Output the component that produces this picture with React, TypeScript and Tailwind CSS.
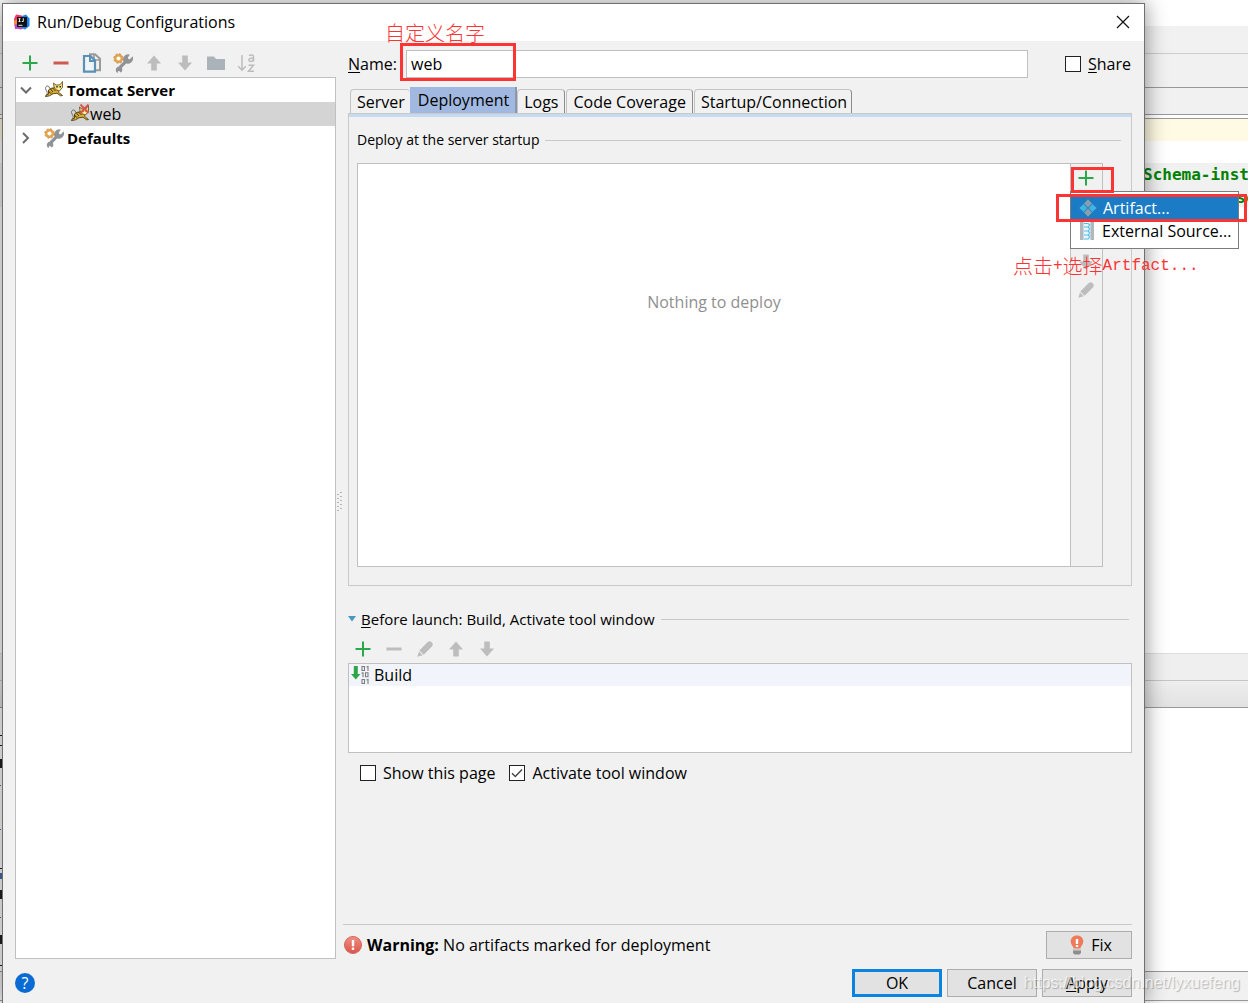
import React, { useState } from "react";

type IconProps = { className?: string };

const PlusIcon = ({ className = "" }: IconProps) => (
  <svg className={className} width="16" height="16" viewBox="0 0 16 16">
    <path d="M0.5 7h15v2h-15z M7 0.5h2v15h-2z" fill="#2aa84a" />
  </svg>
);

const MinusIcon = ({ className = "" }: IconProps) => (
  <svg className={className} width="16" height="16" viewBox="0 0 16 16">
    <path d="M0.5 6.5h15v3h-15z" fill="currentColor" />
  </svg>
);

const CopyIcon = () => (
  <svg width="20" height="20" viewBox="0 0 20 20">
    <path d="M7 1.2h6l5 4.6v11.5h-4" fill="none" stroke="#9a9a9a" strokeWidth="2" />
    <path d="M12 1v6h6" fill="none" stroke="#9a9a9a" strokeWidth="1.6" />
    <path d="M2 3h6.500l4.500 4.500V18.600H2z" fill="#eef4f8" stroke="#5a91b4" strokeWidth="2.2" />
    <path d="M8 3v5h5" fill="none" stroke="#5a91b4" strokeWidth="2" />
  </svg>
);

const WrenchIcon = () => (
  <svg width="20" height="20" viewBox="0 0 20 20">
    <path
      d="M19.300 4.600a4.600 4.600 0 0 1-6.300 5.200l-5 5.100a2.600 2.600 0 0 1-.3 3.900l-1.500-1.700-1.600.5-.4 1.400A3 3 0 0 1 6 14l5.200-5.400A4.600 4.600 0 0 1 15.800 2l-1.700 2.600.9 2 2.200.3z"
      fill="#8f9296"
      stroke="#8f9296"
      strokeWidth="1.200"
    />
    <circle cx="5.500" cy="5.500" r="3.300" fill="#fff" stroke="#e5a34c" strokeWidth="2.400" />
    <circle cx="5.500" cy="5.500" r="4.700" fill="none" stroke="#c98a3c" strokeWidth="1" strokeDasharray="2 1.700" />
  </svg>
);

const UpIcon = () => (
  <svg width="16" height="16" viewBox="0 0 16 16">
    <path d="M8 .5 15 8.500h-4.200v7H5.200v-7H1z" fill="#bdbdbd" />
  </svg>
);

const DownIcon = () => (
  <svg width="16" height="16" viewBox="0 0 16 16">
    <path d="M8 15.500 1 7.500h4.200v-7h5.600v7H15z" fill="#bdbdbd" />
  </svg>
);

const FolderIcon = () => (
  <svg width="20" height="16" viewBox="0 0 20 16">
    <path d="M1 1.500h7l2 2.500h9v11H1z" fill="#aab3b9" />
  </svg>
);

const SortIcon = () => (
  <svg width="20" height="20" viewBox="0 0 20 20" fill="none" stroke="#bcbcbc" strokeWidth="1.500">
    <path d="M5 2v15M1.200 13.200 5 17.200l3.800-4" />
    <path d="M12 2.700c1.600-1.100 4.500-1 4.500 1v4.800M16.500 5c-2.500 0-4.700.3-4.700 2s3.200 2 4.700 0" />
    <path d="M11.500 12.300h5l-5 6h5.500" />
  </svg>
);

const PencilIcon = () => (
  <svg width="16" height="16" viewBox="0 0 16 16" fill="#bdbdbd">
    <path d="M2.300 9.500 10.500 1.200Q12.600-.5 14.700 1.300T14.900 5.500L6.700 13.700z" />
    <path d="M2 10.500 5.700 14.200 .3 15.800z" />
  </svg>
);

const CatIcon = ({ disconnected = false }: { disconnected?: boolean }) => (
  <svg width="20" height="20" viewBox="0 0 20 20">
    <path d="M2.500 14.500C4.500 12.500 2 11 1.500 8.500 1.500 5.500 5 5 5.500 8" fill="none" stroke="#666" strokeWidth="1" />
    <path d="M4.500 10c2-2.500 5-1.500 7-3l3.500 3.500c-1 1.200 0 2.800 2.500 4l1 1-2 .3-3.500-2.600-4 .6-3.500 2-4 .8.500-1.500 2.500-1z" fill="#dcae30" stroke="#4b3d18" strokeWidth="0.900" />
    <path d="M6 8.500 9 12M8.500 8l3 3M4.500 11l2 2.500M7 12.500l1 1" stroke="#3d3216" strokeWidth="1" />
    <path d="M9.500 3 12 5l4-.2L18.500 1.500v6L15.500 11 12 9.800 10 7z" fill="#f4dc74" stroke="#5b4a1c" strokeWidth="0.800" />
    <path d="M12.300 6.700h1.400M15.600 6.700H17" stroke="#222" strokeWidth="1.400" />
    <path d="M13.500 9h2.500" stroke="#fff" strokeWidth="1" />
    {disconnected && <path d="M10.500 .5l8 8.500M18.500 .5l-8 8.500" stroke="#d9534c" strokeWidth="1.900" />}
  </svg>
);

const LogoIcon = () => (
  <svg width="16" height="16" viewBox="0 0 16 16">
    <path d="M0 5 2 .500 8 1.500 9 8 5 14 1 15z" fill="#f7316f" />
    <path d="M0 9.500 5 9l5 5-3 1.500-5.500-1z" fill="#b64cc9" />
    <path d="M8 2 12 .500 15.500 4.500V12l-4.500 3.500-4-2z" fill="#1584f5" />
    <path d="M0 7 3 5v5l-3 1z" fill="#fb8a3c" />
    <path d="M3 3h10v10H3z" fill="#111" />
    <path d="M4.500 4.700h2M5.500 4.700v3M4.500 7.500h2M9.300 4.200v3.300H7.800M4.500 11.300h4" stroke="#fff" strokeWidth="0.900" fill="none" />
  </svg>
);

const Chevron = ({ open }: { open: boolean }) => (
  <svg width="12" height="12" viewBox="0 0 12 12" fill="none" stroke="#6b6b6b" strokeWidth="2">
    <path d={open ? "M1 3.500 6 8.500l5-5" : "M3 1l5 5-5 5"} />
  </svg>
);

const ArtifactIcon = () => (
  <svg width="18" height="18" viewBox="0 0 18 18">
    <path d="M9 .3 13 4.500 9 8.500 5 4.500z M9 9.500l4 4L9 17.700l-4-4.200z" fill="#8b9eab" />
    <path d="M4.500 5 8.500 9l-4 4L.3 9z M13.500 5l4.200 4-4.200 4-4-4z" fill="#43b3df" />
  </svg>
);

const ArchiveIcon = () => (
  <svg width="16" height="18" viewBox="0 0 16 18">
    <path d="M1 0h4v18H1zM11 0h4v18h-4z" fill="#b1b8bd" />
    <path d="M4.500 0h7v18h-7z" fill="#e6f6fc" />
    <path d="M5 1.500h4l2 1.500M5 5h4l2-2M5 5h4l2 2M5 9h4l2-2M5 9h4l2 2M5 13h4l2-2M5 13h4l2 2M5 17h4l2-2" fill="none" stroke="#5bbde2" strokeWidth="1.100" />
  </svg>
);

const BuildIcon = () => (
  <svg width="20" height="20" viewBox="0 0 20 20">
    <path d="M2.800 1h4v8H9.500L4.800 14.500 0 9h2.800z" fill="#2fa548" />
    <g fill="none" stroke="#7c7c7c" strokeWidth="1.100">
      <path d="M11 1.500h2.500v4H11zM15.500 2 17 1.500v4.500" />
      <path d="M10.500 8.300 12 7.800v4.500M14.500 7.800H17v4h-2.500z" />
      <path d="M11 14.500h2.500v4H11zM15.500 15l1.500-.5V19" />
    </g>
  </svg>
);

const WarningIcon = () => (
  <svg width="18" height="18" viewBox="0 0 18 18">
    <defs>
      <linearGradient id="warn" x1="0" y1="0" x2="0" y2="1">
        <stop offset="0" stopColor="#ef8f84" />
        <stop offset="1" stopColor="#dc5449" />
      </linearGradient>
    </defs>
    <circle cx="9" cy="9" r="8.500" fill="url(#warn)" stroke="#d4665b" />
    <path d="M7.800 4h2.400v6.300H7.800zM7.800 11.600h2.400V14H7.800z" fill="#fff" />
  </svg>
);

const BulbIcon = () => (
  <svg width="14" height="20" viewBox="0 0 14 20">
    <path d="M7 .5C3 .5.7 3.200.7 6.500c0 3 2.500 4.500 3 7h6.600c.5-2.500 3-4 3-7C13.300 3.200 11 .5 7 .5z" fill="#ee7a5b" />
    <path d="M5.800 4h2.400v5H5.800zM5.800 10h2.400v2H5.800z" fill="#fff" />
    <path d="M3 14h8v1.500H3z" fill="#c9c9c9" />
    <path d="M3 15.500h8v2.500L9.500 19.500h-5L3 18z" fill="#8d8d8d" />
  </svg>
);

function Check({ id, label, hot, defaultChecked = false }: { id: string; label: string; hot?: string; defaultChecked?: boolean }) {
  return (
    <label htmlFor={id} className="flex h-5 items-center gap-[7px] whitespace-nowrap">
      <span className="relative flex">
        <input id={id} type="checkbox" defaultChecked={defaultChecked} className="peer size-4 appearance-none border border-[#222] bg-white" />
        <svg className="pointer-events-none absolute inset-0 hidden peer-checked:block" width="16" height="16" viewBox="0 0 16 16">
          <path d="M3 8.200 6.300 11.500 13 4.500" fill="none" stroke="#444" strokeWidth="1.400" />
        </svg>
      </span>
      <span>
        {hot && <u className="underline-offset-2">{hot}</u>}
        {label}
      </span>
    </label>
  );
}

function ToolButton({ label, children }: { label: string; children: React.ReactNode }) {
  return (
    <button type="button" aria-label={label} className="mr-px flex h-7 w-[30px] shrink-0 items-center justify-center">
      {children}
    </button>
  );
}

function Backdrop() {
  return (
    <div aria-hidden="true" className="relative flex flex-col overflow-hidden bg-white [grid-area:1/1]">
      <div className="h-[26px] shrink-0" />
      <div className="h-7 shrink-0 border-b border-[#cdcdcd] bg-[#f1f1f1]" />
      <div className="h-[34px] shrink-0 border-b border-[#999] bg-[#f1f1f1]" />
      <div className="h-[27px] shrink-0 border-b border-[#999] bg-[#f1f1f1]" />
      <div className="h-1 shrink-0 border-b border-[#999]" />
      <div className="h-[22px] shrink-0 bg-[#fffae3]" />
      <div className="h-[22px] shrink-0" />
      <div className="flex h-11 shrink-0 flex-col items-end bg-[#f1f1f1] font-['DejaVu_Sans_Mono'] text-base leading-[23px] font-bold text-[#008000]">
        <div className="w-[105px] whitespace-nowrap">Schema-instance</div>
        <div className="w-3 whitespace-nowrap">sc</div>
      </div>
      <div className="flex-1" />
      <div className="h-7 shrink-0 border-y border-t-[#ddd] border-b-[#c5c5c5] bg-[#efefef]" />
      <div className="h-[27px] shrink-0 border-b border-[#999] bg-linear-to-b from-[#eee] to-[#e2e2e2]" />
      <div className="h-[263px] shrink-0" />
      <div className="h-[30px] shrink-0 border-y border-[#999] bg-[#f1f1f1]" />
      <div className="h-[2px] shrink-0 bg-[#f1f1f1]" />
      <svg className="absolute bottom-0 left-0" width="2" height="270" viewBox="0 0 2 270">
        <path d="M0 2h2v1H0zM0 12h2v1H0zM0 26h2v9H0zM0 135h2v1H0zM0 157h2v9H0zM0 202h2v9H0zM0 232h2v1H0z" fill="#222" />
        <path d="M0 52h1v1H0zM0 96h1v1H0zM0 184h1v1H0zM0 140h2v6H0z" fill="#4a6fa8" />
      </svg>
    </div>
  );
}

const tabs = ["Server", "Deployment", "Logs", "Code Coverage", "Startup/Connection"];

function Tabs() {
  const [active, setActive] = useState("Deployment");
  return (
    <div role="tablist" className="flex h-[26px] items-end pl-[2px]">
      {tabs.map((t) =>
        t === active ? (
          <button key={t} role="tab" aria-selected="true" className="h-[26px] border-r-2 border-[#8a97ad] bg-[#a1b9e0] pr-[6px] pl-2 whitespace-nowrap">
            {t}
          </button>
        ) : (
          <button
            key={t}
            role="tab"
            aria-selected="false"
            onClick={() => setActive(t)}
            className="mr-px h-6 rounded-t-sm border border-b-0 border-[#c4c4c4] border-r-[#8c8c8c] px-[6px] whitespace-nowrap first:mr-0 first:border-r-0 first:pr-[5px] last:mr-0 last:pr-1"
          >
            {t}
          </button>
        ),
      )}
    </div>
  );
}

function AddMenu() {
  return (
    <div role="menu" className="absolute top-[27px] -left-px z-10 w-[169px] border border-[#7c7c7c] bg-white pt-1 pb-[6px]">
      <button role="menuitem" className="flex h-[23px] w-full items-center gap-[6px] bg-[#1b7bc4] pl-2 text-white">
        <ArtifactIcon />
        Artifact...
      </button>
      <button role="menuitem" className="flex h-[23px] w-full items-center gap-[7px] pl-2 whitespace-nowrap">
        <ArchiveIcon />
        External Source...
      </button>
      <div className="pointer-events-none absolute top-[2px] -left-[15px] h-7 w-[191px] border-3 border-[#fb3434]" />
    </div>
  );
}

function DeployBox() {
  return (
    <div className="mr-7 ml-2 flex min-h-[404px] border border-[#c0c0c0] bg-white">
      <div className="flex flex-1 justify-center pt-[128px] text-[#8f8f8f]">Nothing to deploy</div>
      <div className="relative flex w-8 flex-col border-l border-[#c0c0c0] bg-[#f1f1f1]">
        <ToolButton label="Add"><PlusIcon /></ToolButton>
        <ToolButton label="Remove"><MinusIcon className="text-[#bdbdbd]" /></ToolButton>
        <ToolButton label="Move up"><UpIcon /></ToolButton>
        <ToolButton label="Move down"><DownIcon /></ToolButton>
        <ToolButton label="Edit"><PencilIcon /></ToolButton>
        <div className="pointer-events-none absolute top-[3px] left-0 z-20 h-[26px] w-[43px] border-3 border-[#fb3434]" />
        <AddMenu />
        <div className="absolute top-[88px] -left-[58px] z-20 flex h-7 items-center font-['Noto_Sans_CJK_SC',sans-serif] text-xl font-light whitespace-nowrap text-[#fb3434]">
          点击<span className="font-['Liberation_Mono'] text-base">+</span>选择
          <span className="font-['Liberation_Mono'] text-base">Artfact...</span>
        </div>
      </div>
    </div>
  );
}

function ConfigTree() {
  return (
    <div className="flex w-[321px] shrink-0 flex-col">
      <div className="flex h-9 items-center pt-[7px]">
        <ToolButton label="Add configuration"><PlusIcon /></ToolButton>
        <ToolButton label="Remove configuration"><MinusIcon className="text-[#cc5a50]" /></ToolButton>
        <ToolButton label="Copy configuration"><CopyIcon /></ToolButton>
        <ToolButton label="Edit defaults"><WrenchIcon /></ToolButton>
        <ToolButton label="Move up"><UpIcon /></ToolButton>
        <ToolButton label="Move down"><DownIcon /></ToolButton>
        <ToolButton label="New folder"><FolderIcon /></ToolButton>
        <ToolButton label="Sort"><SortIcon /></ToolButton>
      </div>
      <div role="tree" aria-label="Configurations" className="flex-1 border border-[#c0c0c0] bg-white">
        <button role="treeitem" className="flex h-6 w-full items-center pl-1 text-[15px] font-bold">
          <Chevron open />
          <span className="mr-[3px] ml-3"><CatIcon /></span>
          Tomcat Server
        </button>
        <button role="treeitem" aria-selected="true" className="flex h-6 w-full items-center bg-[#d4d4d4] pl-[54px]">
          <CatIcon disconnected />
          web
        </button>
        <button role="treeitem" className="flex h-6 w-full items-center pl-1 text-[15px] font-bold">
          <Chevron open={false} />
          <span className="mr-[3px] ml-3"><WrenchIcon /></span>
          Defaults
        </button>
      </div>
    </div>
  );
}

function NameRow() {
  return (
    <div className="flex items-center pt-[9px]">
      <label htmlFor="name" className="w-[58px] shrink-0">
        <u className="underline-offset-2">N</u>ame:
      </label>
      <div className="relative flex flex-1">
        <input id="name" defaultValue="web" className="h-7 w-full border border-[#c0c0c0] bg-white px-1 outline-none" />
        <div className="pointer-events-none absolute -top-[7px] -left-[6px] h-[38px] w-[116px] border-3 border-[#fb3434]" />
        <div className="absolute -top-[31px] -left-[21px] font-['Noto_Sans_CJK_SC',sans-serif] text-xl font-light whitespace-nowrap text-[#fb3434]">
          自定义名字
        </div>
      </div>
      <div className="ml-[37px] w-[67px]">
        <Check id="share" hot="S" label="hare" />
      </div>
    </div>
  );
}

function BeforeLaunch() {
  return (
    <section className="mt-[23px]">
      <div className="flex h-5 items-center pr-[3px] text-[15px]">
        <svg className="mr-[5px]" width="8" height="6" viewBox="0 0 8 6">
          <path d="M0 0h8L4 5.500z" fill="#4a97c4" />
        </svg>
        <span className="mr-[6px] whitespace-nowrap">
          <u className="underline-offset-2">B</u>efore launch: Build, Activate tool window
        </span>
        <div className="h-px flex-1 bg-[#c9c9c9]" />
      </div>
      <div className="mt-[6px] flex">
        <ToolButton label="Add task"><PlusIcon /></ToolButton>
        <ToolButton label="Remove task"><MinusIcon className="text-[#bdbdbd]" /></ToolButton>
        <ToolButton label="Edit task"><PencilIcon /></ToolButton>
        <ToolButton label="Move task up"><UpIcon /></ToolButton>
        <ToolButton label="Move task down"><DownIcon /></ToolButton>
      </div>
      <div className="min-h-[90px] border border-[#c0c0c0] bg-white">
        <div className="flex h-[22px] items-center gap-[3px] bg-[#f1f5fb] pl-[2px]">
          <BuildIcon />
          Build
        </div>
      </div>
      <div className="mt-[10px] flex gap-[14px] pl-3">
        <Check id="show" label="Show this page" />
        <Check id="activate" label="Activate tool window" defaultChecked />
      </div>
    </section>
  );
}

const pushButton = "flex h-7 items-center justify-center border border-[#adadad] bg-[#e2e2e2]";

export default function App() {
  return (
    <div className="relative grid min-h-screen grid-cols-1 overflow-hidden font-['Open_Sans','Noto_Sans',sans-serif] text-base leading-5 text-black">
      <Backdrop />
      <div
        role="dialog"
        aria-label="Run/Debug Configurations"
        className="z-10 mt-[3px] mr-[103px] ml-[2px] flex flex-col border border-b-0 border-[#707070] bg-[#f1f1f1] shadow-[0_0_20px_rgba(0,0,0,0.45)] [grid-area:1/1]"
      >
        <header className="flex h-[37px] shrink-0 items-center bg-white pr-[14px] pb-[2px] pl-[11px]">
          <LogoIcon />
          <h1 className="ml-[7px] flex-1">Run/Debug Configurations</h1>
          <button aria-label="Close">
            <svg width="14" height="14" viewBox="0 0 14 14" stroke="#111" strokeWidth="1.200">
              <path d="M1 1l12 12M13 1 1 13" />
            </svg>
          </button>
        </header>

        <div className="flex flex-1 pr-3 pl-3">
          <ConfigTree />
          <div className="flex w-[7px] shrink-0 items-center justify-center pt-1">
            <svg width="5" height="20" viewBox="0 0 5 20" fill="#b5b5b5">
              <path d="M3 0h2v1H3zM0 2h2v1H0zM3 4h2v1H3zM0 6h2v1H0zM3 8h2v1H3zM0 10h2v1H0zM3 12h2v1H3zM0 14h2v1H0zM3 16h2v1H3zM0 18h2v1H0z" />
            </svg>
          </div>
          <main className="flex min-w-0 flex-1 flex-col">
            <div className="flex flex-1 flex-col pl-[5px]">
              <NameRow />
              <div className="pt-[9px]">
                <Tabs />
              </div>
              <div className="border border-[#c9c9c9] pb-[18px]">
                <div className="h-[3px] bg-[#c6daf2]" />
                <div className="mt-[13px] mb-[13px] flex h-5 items-center gap-[6px] pr-[10px] pl-2 text-sm">
                  <span className="whitespace-nowrap">Deploy at the server startup</span>
                  <div className="h-px flex-1 bg-[#c9c9c9]" />
                </div>
                <DeployBox />
              </div>
              <BeforeLaunch />
            </div>
            <div className="flex h-[35px] items-end border-t border-[#c9c9c9]">
              <div className="flex h-7 flex-1 items-center gap-[5px] pl-px">
                <WarningIcon />
                <p>
                  <b>Warning:</b> No artifacts marked for deployment
                </p>
              </div>
              <button className={`${pushButton} w-[86px] gap-[7px] pl-1`}>
                <BulbIcon />
                Fix
              </button>
            </div>
          </main>
        </div>

        <footer className="flex items-center gap-[5px] px-3 pt-[10px] pb-[6px]">
          <button aria-label="Help" className="flex size-5 items-center justify-center rounded-full bg-[#0a6cd2] text-white">
            ?
          </button>
          <div className="flex-1" />
          <button className="flex h-7 w-[90px] items-center justify-center border-3 border-[#0a84e0] bg-[#e2e2e2]">OK</button>
          <button className={`${pushButton} w-[90px]`}>Cancel</button>
          <button className={`${pushButton} w-[90px]`}>
            <span>
              <u className="underline-offset-2">A</u>pply
            </span>
          </button>
        </footer>
      </div>
      <div className="pointer-events-none absolute right-2 bottom-2 z-20 font-['Liberation_Sans'] text-base text-white/70 [text-shadow:1px_1px_1px_rgba(0,0,0,0.25)]">
        https://blog.csdn.net/lyxuefeng
      </div>
    </div>
  );
}
